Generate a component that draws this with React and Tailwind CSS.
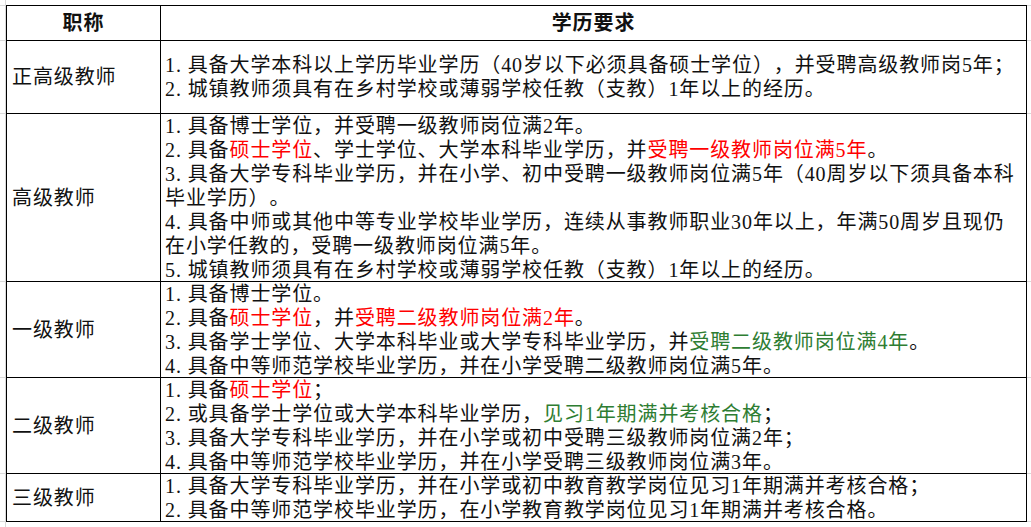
const R = ({ children }) => <span className="text-[#ff0000]">{children}</span>;
const G = ({ children }) => <span className="text-[#2e7d32]">{children}</span>;

const rows = [
  {
    title: "正高级教师",
    h: "h-[73px]",
    lines: [
      "1. 具备大学本科以上学历毕业学历（40岁以下必须具备硕士学位），并受聘高级教师岗5年；",
      "2. 城镇教师须具有在乡村学校或薄弱学校任教（支教）1年以上的经历。",
    ],
  },
  {
    title: "高级教师",
    h: "h-[168px]",
    lines: [
      "1. 具备博士学位，并受聘一级教师岗位满2年。",
      <>2. 具备<R>硕士学位</R>、学士学位、大学本科毕业学历，并<R>受聘一级教师岗位满5年</R>。</>,
      "3. 具备大学专科毕业学历，并在小学、初中受聘一级教师岗位满5年（40周岁以下须具备本科",
      "毕业学历）。",
      "4. 具备中师或其他中等专业学校毕业学历，连续从事教师职业30年以上，年满50周岁且现仍",
      "在小学任教的，受聘一级教师岗位满5年。",
      "5. 城镇教师须具有在乡村学校或薄弱学校任教（支教）1年以上的经历。",
    ],
  },
  {
    title: "一级教师",
    h: "h-[96px]",
    lines: [
      "1. 具备博士学位。",
      <>2. 具备<R>硕士学位</R>，并<R>受聘二级教师岗位满2年</R>。</>,
      <>3. 具备学士学位、大学本科毕业或大学专科毕业学历，并<G>受聘二级教师岗位满4年</G>。</>,
      "4. 具备中等师范学校毕业学历，并在小学受聘二级教师岗位满5年。",
    ],
  },
  {
    title: "二级教师",
    h: "h-[96px]",
    lines: [
      <>1. 具备<R>硕士学位</R>；</>,
      <>2. 或具备学士学位或大学本科毕业学历，<G>见习1年期满并考核合格</G>；</>,
      "3. 具备大学专科毕业学历，并在小学或初中受聘三级教师岗位满2年；",
      "4. 具备中等师范学校毕业学历，并在小学受聘三级教师岗位满3年。",
    ],
  },
  {
    title: "三级教师",
    h: "h-[48px]",
    lines: [
      "1. 具备大学专科毕业学历，并在小学或初中教育教学岗位见习1年期满并考核合格；",
      "2. 具备中等师范学校毕业学历，在小学教育教学岗位见习1年期满并考核合格。",
    ],
  },
];

export default function App() {
  return (
    <div
      className="w-[1031px] h-[527px] bg-white text-[#111] text-[20px] leading-[24px] tracking-[0.9px] overflow-hidden [text-spacing-trim:space-all]"
      style={{ fontFamily: '"Liberation Serif", "Noto Sans CJK SC", serif' }}
    >
      <div className="flex h-[5px]">
        <div className="w-[6px] shrink-0 border-r border-[#d9d9d9]" />
      </div>

      <div className="flex h-[36px]">
        <div className="w-[6px] shrink-0 border-r border-t border-b border-[#d9d9d9]" />
        <div className="w-[155px] shrink-0 border border-black flex items-center justify-center font-bold">
          职称
        </div>
        <div className="w-[866px] shrink-0 border-t border-r border-b border-black flex items-center justify-center font-bold">
          学历要求
        </div>
        <div className="flex-1 border-t border-b border-[#d9d9d9]" />
      </div>

      {rows.map((row) => (
        <div key={row.title} className={`flex ${row.h}`}>
          <div className="w-[6px] shrink-0 border-r border-b border-[#d9d9d9]" />
          <div className="w-[155px] shrink-0 border-l border-r border-b border-black flex items-center pl-[5px]">
            {row.title}
          </div>
          <div className="w-[866px] shrink-0 border-r border-b border-black flex flex-col justify-center pl-[4px] whitespace-nowrap">
            {row.lines.map((line, i) => (
              <div key={i}>{line}</div>
            ))}
          </div>
          <div className="flex-1 border-b border-[#d9d9d9]" />
        </div>
      ))}

      <div className="flex h-[10px]">
        <div className="w-[6px] shrink-0 border-r border-[#d9d9d9]" />
      </div>
    </div>
  );
}
